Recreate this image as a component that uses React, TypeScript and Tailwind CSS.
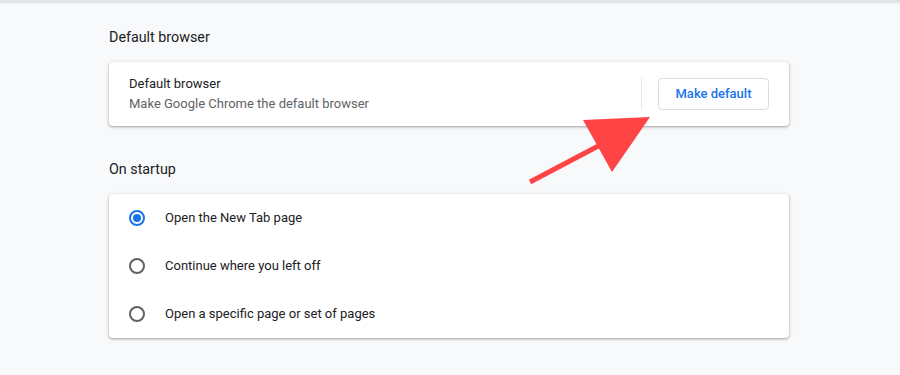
import React from 'react';

const cardShadow =
  'shadow-[0_1px_2px_0_rgba(60,64,67,0.3),0_1px_3px_1px_rgba(60,64,67,0.15)]';

const Radio = ({ checked }: { checked?: boolean }) => (
  <span
    className={`flex h-4 w-4 items-center justify-center rounded-full border-2 ${
      checked ? 'border-[#1a73e8]' : 'border-[#5f6368]'
    }`}
  >
    {checked && <span className="h-2 w-2 rounded-full bg-[#1a73e8]" />}
  </span>
);

const options = [
  { label: 'Open the New Tab page', checked: true },
  { label: 'Continue where you left off' },
  { label: 'Open a specific page or set of pages' },
];

export default function App() {
  return (
    <div
      className="relative h-[375px] w-[900px] overflow-hidden bg-[#f8f9fa] text-[13px] text-[#202124]"
      style={{ fontFamily: 'Roboto, "Liberation Sans", sans-serif' }}
    >
      {/* toolbar edge */}
      <div className="h-[2px] bg-[#e3e4e6] shadow-[0_1px_2px_rgba(60,64,67,0.15)]" />

      <div className="mx-[109px] w-[680px] pt-[25px]">
        {/* Default browser */}
        <h2 className="text-[14.3px] leading-5 font-normal">Default browser</h2>
        <div className={`mt-[15px] flex h-16 items-center rounded bg-white pl-5 pr-5 ${cardShadow}`}>
          <div className="flex-1 leading-5">
            <div>Default browser</div>
            <div className="text-[#5f6368]">Make Google Chrome the default browser</div>
          </div>
          <div className="h-8 w-px bg-[#e8eaed]" />
          <button className="ml-4 h-8 w-[111px] rounded border border-[#dadce0] bg-white text-[13px] font-medium text-[#1a73e8]">
            Make default
          </button>
        </div>

        {/* On startup */}
        <h2 className="mt-[33px] text-[14.3px] leading-5 font-normal">On startup</h2>
        <div className={`mt-[15px] rounded bg-white ${cardShadow}`}>
          {options.map((o) => (
            <div key={o.label} className="flex h-12 items-center pl-5">
              <Radio checked={o.checked} />
              <span className="ml-5">{o.label}</span>
            </div>
          ))}
        </div>
      </div>

      {/* annotation arrow */}
      <svg
        className="pointer-events-none absolute left-0 top-0"
        width="900"
        height="375"
        viewBox="0 0 900 375"
      >
        <line x1="530" y1="182" x2="604" y2="143" stroke="#fe4444" strokeWidth="5" />
        <polygon points="583,120 650,117 612,172" fill="#fe4444" />
      </svg>
    </div>
  );
}
